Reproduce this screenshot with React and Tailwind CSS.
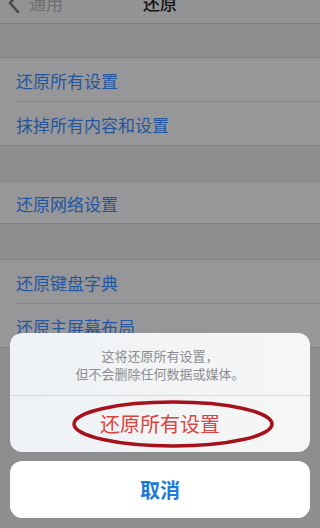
export default function App() {
  const font = { fontFamily: '"Noto Sans CJK SC", "Noto Sans", sans-serif' };
  return (
    <div className="w-[320px] h-[528px] overflow-hidden bg-[#8e8e91] flex flex-col relative" style={font}>
      {/* nav */}
      <div className="h-[24px] overflow-hidden bg-[#939395] border-b border-[#7f7f82] shrink-0">
        <div className="h-[44px] -mt-[19px] flex items-center relative">
          <div className="flex items-center pl-[8px] text-[#6e6e70] text-[17px]">
            <svg width="12" height="20" viewBox="0 0 12 20" className="mr-[9px]">
              <path d="M10 1 L2 10 L10 19" stroke="#4a4a4c" strokeWidth="2.6" fill="none" strokeLinecap="round" strokeLinejoin="round" />
            </svg>
            <span>通用</span>
          </div>
          <div className="flex-1" />
          <div className="absolute left-0 right-0 text-center text-[17px] text-[#111] font-medium">还原</div>
        </div>
      </div>
      <div className="h-[34px] shrink-0 border-b border-[#828285]" />
      <div className="bg-[#979799]">
        <div className="h-[44px] flex items-center pl-[16px] text-[17px] text-[#2456a0]">
          <div className="flex-1 h-full flex items-center pt-[3px] border-b border-[#868689]">还原所有设置</div>
        </div>
        <div className="h-[44px] flex items-center pl-[16px] pt-[3px] text-[17px] text-[#2456a0] border-b border-[#828285]">抹掉所有内容和设置</div>
      </div>
      <div className="h-[36px] shrink-0 border-b border-[#828285]" />
      <div className="bg-[#979799] h-[42px] flex items-center pl-[16px] pt-[3px] text-[17px] text-[#2456a0] border-b border-[#828285]">还原网络设置</div>
      <div className="h-[36px] shrink-0 border-b border-[#828285]" />
      <div className="bg-[#979799]">
        <div className="h-[44px] flex items-center pl-[16px] text-[17px] text-[#2456a0]">
          <div className="flex-1 h-full flex items-center pt-[3px] border-b border-[#868689]">还原键盘字典</div>
        </div>
        <div className="h-[44px] flex items-center pl-[16px] pt-[3px] text-[17px] text-[#2456a0] border-b border-[#828285]">还原主屏幕布局</div>
      </div>

      {/* action sheet */}
      <div className="absolute left-[10px] right-[10px] bottom-[10px] flex flex-col gap-[9px]">
        <div className="rounded-[12px] overflow-hidden bg-gradient-to-r from-[#eef2f5] to-[#f6f6f6]">
          <div className="h-[63px] flex flex-col items-center justify-center pt-[2px] text-[13px] leading-[18px] text-[#8c8c8e] border-b border-[#d6d8da]">
            <div>这将还原所有设置，</div>
            <div>但不会删除任何数据或媒体。</div>
          </div>
          <div className="h-[56px] flex items-center justify-center relative">
            <span className="text-[20px] text-[#d8463f]">还原所有设置</span>
            <svg className="absolute left-[61px] top-[3px]" width="204" height="50" viewBox="0 0 204 50">
              <ellipse cx="102" cy="25" rx="99" ry="22" fill="none" stroke="#a5121c" strokeWidth="3.5" />
            </svg>
          </div>
        </div>
        <div className="h-[57px] rounded-[12px] bg-white flex items-center justify-center text-[20px] font-semibold text-[#1b7ad8]">取消</div>
      </div>
    </div>
  );
}
